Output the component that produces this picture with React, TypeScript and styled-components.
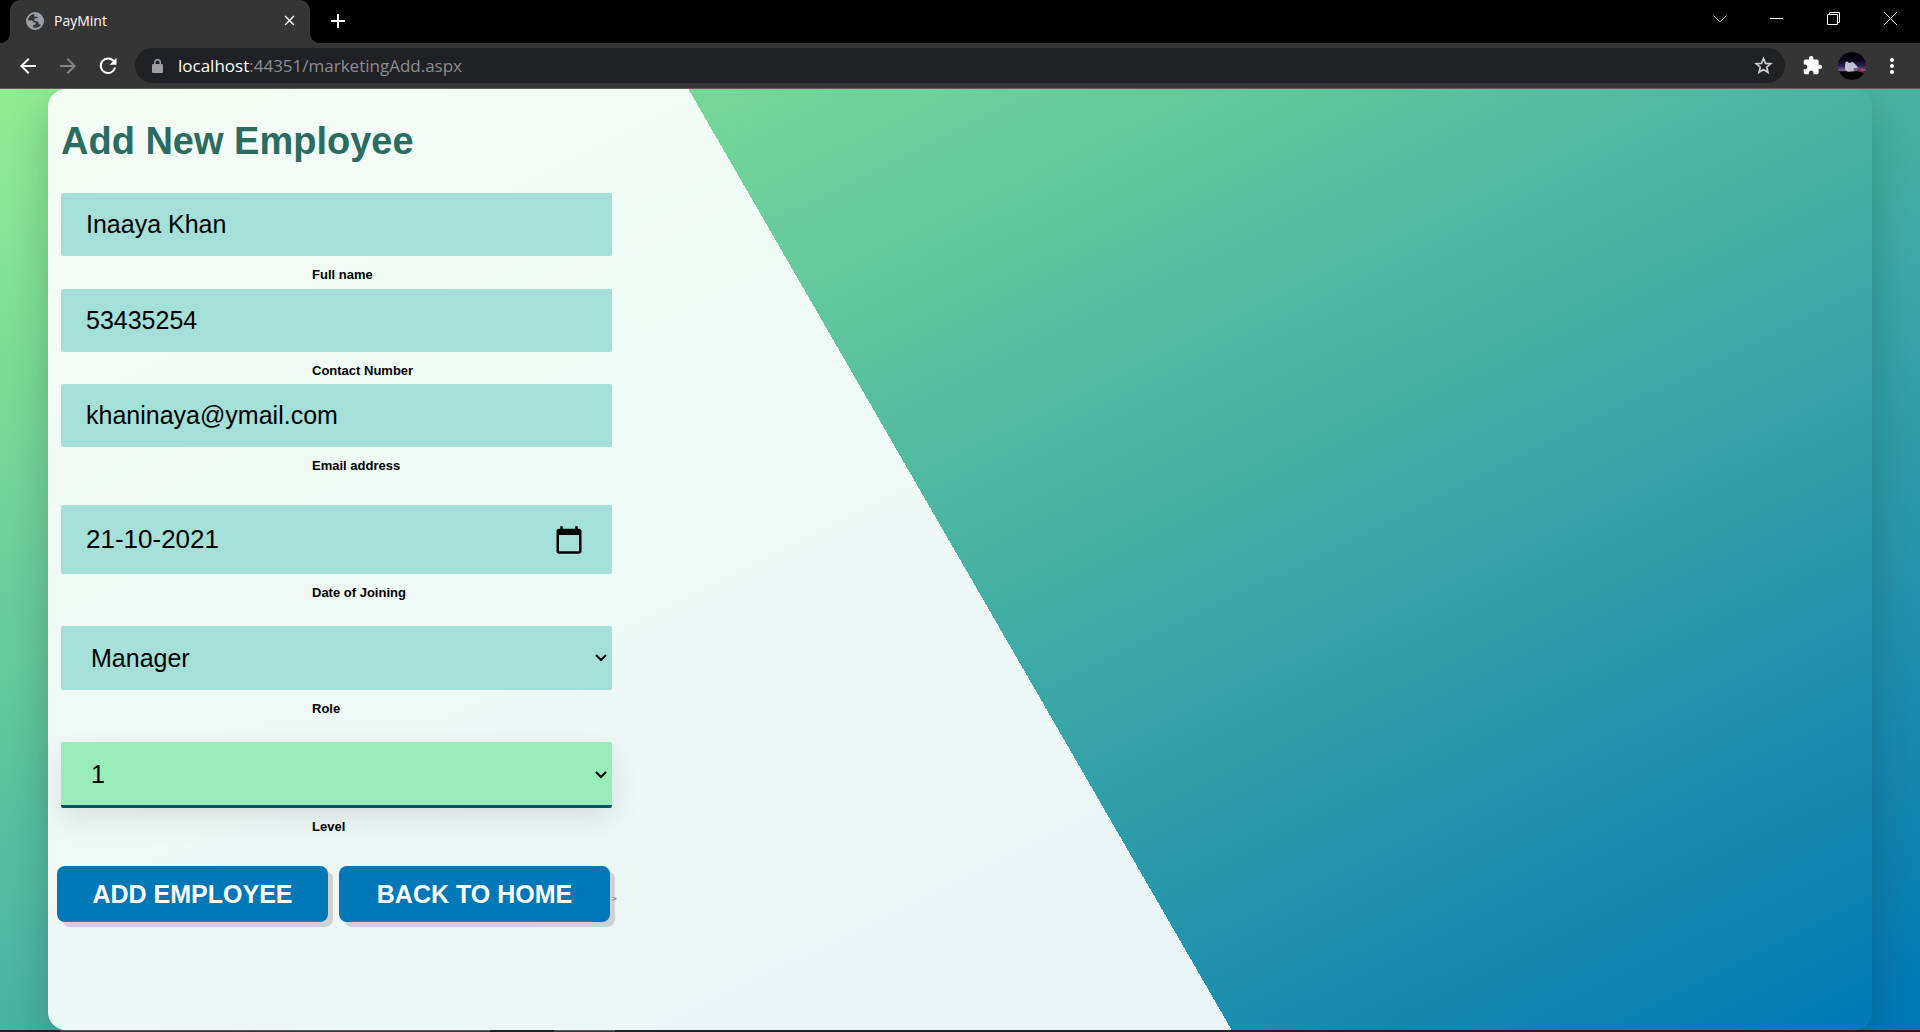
import React from "react";
import styled, { createGlobalStyle } from "styled-components";
import {
  MdArrowBack,
  MdArrowForward,
  MdExtension,
  MdMoreVert,
  MdClose,
  MdAdd,
} from "react-icons/md";

const GlobalStyle = createGlobalStyle`
  *, *::before, *::after { box-sizing: border-box; }
  body { margin: 0; }
`;

const sans = `"Liberation Sans", Arial, sans-serif`;
const chromeFont = `"Open Sans", "Noto Sans", sans-serif`;

const Window = styled.div`
  min-height: 100vh;
  display: flex;
  flex-direction: column;
  font-family: ${sans};
`;

const TabStrip = styled.div`
  display: flex;
  align-items: stretch;
  height: 43px;
  padding: 0 1px 0 10px;
  background: #000;
  color: #fff;
  font-family: ${chromeFont};
`;

const Tab = styled.div`
  position: relative;
  display: flex;
  align-items: center;
  width: 300px;
  padding: 0 12px 2px 16px;
  border-radius: 10px 10px 0 0;
  background: #353535;
  font-size: 14px;

  &::before,
  &::after {
    content: "";
    position: absolute;
    bottom: 0;
    width: 10px;
    height: 10px;
  }
  &::before {
    right: 100%;
    background: radial-gradient(circle at 0 0, transparent 10px, #353535 10px);
  }
  &::after {
    left: 100%;
    background: radial-gradient(circle at 100% 0, transparent 10px, #353535 10px);
  }
`;

const TabTitle = styled.span`
  flex: 1;
  margin-left: 10px;
`;

const IconButton = styled.button<{ $size?: number; $dim?: boolean }>`
  display: grid;
  place-items: center;
  width: ${(p) => p.$size ?? 40}px;
  height: ${(p) => p.$size ?? 40}px;
  padding: 0;
  border: 0;
  background: none;
  color: ${(p) => (p.$dim ? "#868686" : "#fff")};
`;

const NewTab = styled(IconButton)`
  margin: 1px 0 0 8px;
`;

const WindowControls = styled.div`
  display: flex;
  margin-left: auto;
`;

const WindowButton = styled.button`
  display: grid;
  place-items: center;
  width: 57px;
  height: 37px;
  padding: 0;
  border: 0;
  background: none;
`;

const Toolbar = styled.div`
  display: flex;
  align-items: center;
  height: 46px;
  padding: 0 8px;
  border-bottom: 1px solid #5c5c5c;
  background: #353535;
`;

const AddressBar = styled.div`
  flex: 1;
  display: flex;
  align-items: center;
  height: 35px;
  margin: 0 7px;
  padding: 0 2px 0 17px;
  border-radius: 18px;
  background: #202124;
  color: #9aa0a6;
`;

const Address = styled.div`
  flex: 1;
  margin-left: 15px;
  color: #8b8e92;
  font-family: ${chromeFont};
  font-size: 17px;

  b {
    color: #fff;
    font-weight: 400;
  }
`;

const Page = styled.main`
  flex: 1;
  display: flex;
  overflow: hidden;
  background: linear-gradient(to right bottom, #90ee90, #0077b6);
`;

const Card = styled.section`
  flex: 1;
  margin: 0 48px;
  padding: 30px 13px 0;
  border-radius: 18px;
  background: linear-gradient(60deg, rgba(255, 255, 255, 0.9) 50%, transparent 50%);
  box-shadow: 0 15px 40px rgba(0, 0, 0, 0.2);
`;

const Title = styled.h1`
  margin: 0 0 29px;
  color: #2a6b62;
  font-size: 38px;
  line-height: 45px;
`;

const Form = styled.form`
  display: flex;
  flex-direction: column;
  max-width: 551px;
`;

const Field = styled.div<{ $gap?: number }>`
  display: flex;
  flex-direction: column;
  margin-bottom: ${(p) => p.$gap ?? 4}px;
`;

const Label = styled.label`
  margin: 10px 0 0 251px;
  font-size: 13px;
  font-weight: 700;
  line-height: 18px;
  color: #000;
`;

const TextInput = styled.input`
  height: 63px;
  padding: 0 25px;
  border: 0;
  border-radius: 2px;
  outline: 0;
  background: #a4e0d8;
  color: #000;
  font: 25px ${sans};
`;

const DateBox = styled.div`
  display: flex;
  align-items: center;
  height: 69px;
  padding-right: 28px;
  border-radius: 2px;
  background: #a4e0d8;
`;

const DateInput = styled(TextInput)`
  flex: 1;
  min-width: 0;
  background: none;
  font-size: 26px;
`;

const CalendarButton = styled.button`
  padding: 0;
  border: 0;
  background: none;
  line-height: 0;
`;

const SelectBox = styled.div`
  display: grid;
  align-items: center;

  > * {
    grid-area: 1 / 1;
  }
  > svg {
    justify-self: end;
    margin-right: 5px;
    pointer-events: none;
  }
`;

const Select = styled.select<{ $active?: boolean }>`
  appearance: none;
  height: ${(p) => (p.$active ? 66 : 64)}px;
  padding: 0 30px;
  border: 0;
  border-bottom: ${(p) => (p.$active ? "3px solid #05545f" : "0")};
  border-radius: 2px;
  outline: 0;
  background-color: ${(p) => (p.$active ? "#98ecb7" : "#a4e0d8")};
  box-shadow: ${(p) => (p.$active ? "0 10px 30px rgba(0, 0, 0, 0.1)" : "none")};
  color: #000;
  font: 25px ${sans};
`;

const Actions = styled.div`
  display: flex;
  align-items: center;
  gap: 11px;
  margin: 0 -4px;
`;

const ActionButton = styled.button`
  flex: 0 0 271px;
  height: 56px;
  padding: 0;
  border: 0;
  border-radius: 8px;
  background: #0077b6;
  box-shadow: 5px 5px 0 #ced2d3;
  color: #fff;
  font: 700 25px ${sans};
  text-transform: uppercase;
`;

const Stray = styled.span`
  margin: 8px 0 0 -9px;
  color: #555;
  font-size: 8px;
`;

const TaskbarEdge = styled.div`
  display: flex;
  height: 2px;
  padding-left: 60px;
  gap: 64px;
  background: #202024;
`;

const TaskbarItem = styled.div<{ $width: number }>`
  width: ${(p) => p.$width}px;
  border-top: 1px solid #5a5a5a;
  background: #3a3436;
`;

const Globe = () => (
  <svg width="18" height="18" viewBox="0 0 18 18">
    <circle cx="9" cy="9" r="9" fill="#9aa0a6" />
    <path
      d="M8.500 2C5 2.200 2.200 5 2 8.300l3.600.2c1.200.1 1.700.8 1.700 1.800l2 .3c.6.4.6 1.500 0 2.100H7.200v2.900c3 .9 6.400-.5 7.900-3.200-.9.4-1.700.2-2.200-.5-.6-.9-.2-2-1.200-2.500-1-.4-2.400.1-3.200-.7-.8-.9-.2-2.200.9-2.400.8-.1 1.600.3 2.200-.2.5-.5-.1-1.200-.9-1.300-1-.1-2.200 0-2.500-.9-.2-.6.100-1.200.3-1.900z"
      fill="#353535"
    />
  </svg>
);

const Reload = () => (
  <svg width="18" height="18" viewBox="0 0 18 18">
    <path d="M14.800 4.200A7.300 7.300 0 1 0 16.100 10.600" fill="none" stroke="#fff" strokeWidth="2" />
    <path d="M17.500.8v7h-7z" fill="#fff" />
  </svg>
);

const Lock = () => (
  <svg width="11" height="14" viewBox="0 0 11 14">
    <rect y="5" width="11" height="9" rx="1" fill="#9aa0a6" />
    <path d="M2.700 6V3.500a2.800 2.800 0 0 1 5.600 0V6" fill="none" stroke="#9aa0a6" strokeWidth="1.500" />
  </svg>
);

const Star = () => (
  <svg width="19" height="19" viewBox="0 0 19 19" fill="none" stroke="#cfcfcf" strokeWidth="1.700">
    <path d="M9.500 2.500l2 4.900 5.200.4-4 3.400 1.300 5.200-4.500-2.800L5 16.400l1.300-5.200-4-3.400 5.200-.4z" />
  </svg>
);

const Chevron = () => (
  <svg width="12" height="8" viewBox="0 0 12 8" fill="none" stroke="#000" strokeWidth="2">
    <path d="M1 1l5 5 5-5" />
  </svg>
);

const Avatar = () => (
  <svg width="28" height="28" viewBox="0 0 28 28">
    <defs>
      <linearGradient id="sky" x1="0" y1="0" x2="0" y2="1">
        <stop offset="0" stopColor="#020104" />
        <stop offset="0.3" stopColor="#0c061c" />
        <stop offset="0.5" stopColor="#30204e" />
        <stop offset="0.68" stopColor="#8a6398" />
        <stop offset="0.7" stopColor="#080406" />
      </linearGradient>
      <clipPath id="disc">
        <circle cx="14" cy="14" r="14" />
      </clipPath>
    </defs>
    <g clipPath="url(#disc)">
      <rect width="28" height="28" fill="url(#sky)" />
      <path d="M19 17l7 2.500v1.500l-7-2z" fill="#a0182c" />
      <path d="M7 14l.5-4 2-.5 1.500 1.500 4-1 3 3 2 3-3 3-7 .8-3-2z" fill="#c3c0d4" />
      <path d="M16 16l5 0-1.500 2.500-4 1z" fill="#6d6872" />
    </g>
  </svg>
);

export default function App() {
  return (
    <>
      <GlobalStyle />
      <Window>
        <TabStrip>
          <Tab>
            <Globe />
            <TabTitle>PayMint</TabTitle>
            <IconButton $size={18} aria-label="Close tab">
              <MdClose size={17} />
            </IconButton>
          </Tab>
          <NewTab aria-label="New tab">
            <MdAdd size={24} />
          </NewTab>
          <WindowControls>
            <WindowButton aria-label="Search tabs">
              <svg width="14" height="8" viewBox="0 0 14 8" fill="none" stroke="#ccc">
                <path d="M.5.500l6.500 6.500 6.500-6.500" />
              </svg>
            </WindowButton>
            <WindowButton aria-label="Minimize">
              <svg width="13" height="13" viewBox="0 0 13 13" stroke="#fff">
                <path d="M0 6.500h13" />
              </svg>
            </WindowButton>
            <WindowButton aria-label="Restore">
              <svg width="13" height="13" viewBox="0 0 13 13" fill="none" stroke="#fff">
                <path d="M.5 2.500h10v10h-10zM2.500 2.500v-2h10v10h-2" />
              </svg>
            </WindowButton>
            <WindowButton aria-label="Close">
              <svg width="13" height="13" viewBox="0 0 13 13" stroke="#fff">
                <path d="M0 0l13 13M13 0l-13 13" />
              </svg>
            </WindowButton>
          </WindowControls>
        </TabStrip>
        <Toolbar>
          <IconButton aria-label="Back">
            <MdArrowBack size={24} />
          </IconButton>
          <IconButton $dim aria-label="Forward">
            <MdArrowForward size={24} />
          </IconButton>
          <IconButton aria-label="Reload">
            <Reload />
          </IconButton>
          <AddressBar>
            <Lock />
            <Address>
              <b>localhost</b>:44351/marketingAdd.aspx
            </Address>
            <IconButton aria-label="Bookmark this page">
              <Star />
            </IconButton>
          </AddressBar>
          <IconButton aria-label="Extensions">
            <MdExtension size={21} />
          </IconButton>
          <IconButton aria-label="Profile">
            <Avatar />
          </IconButton>
          <IconButton aria-label="Menu">
            <MdMoreVert size={24} />
          </IconButton>
        </Toolbar>
        <Page>
          <Card>
            <Title>Add New Employee</Title>
            <Form onSubmit={(e) => e.preventDefault()}>
              <Field $gap={5}>
                <TextInput id="name" defaultValue="Inaaya Khan" />
                <Label htmlFor="name">Full name</Label>
              </Field>
              <Field>
                <TextInput id="contact" inputMode="numeric" defaultValue="53435254" />
                <Label htmlFor="contact">Contact Number</Label>
              </Field>
              <Field $gap={30}>
                <TextInput id="email" type="email" defaultValue="khaninaya@ymail.com" />
                <Label htmlFor="email">Email address</Label>
              </Field>
              <Field $gap={24}>
                <DateBox>
                  <DateInput id="joined" defaultValue="21-10-2021" />
                  <CalendarButton type="button" aria-label="Pick a date">
                    <svg width="30" height="30" viewBox="0 0 24 24">
                      <path d="M20 3h-1V1h-2v2H7V1H5v2H4c-1.100 0-2 .9-2 2v16c0 1.100.9 2 2 2h16c1.100 0 2-.9 2-2V5c0-1.100-.9-2-2-2zm0 18H4V8h16v13z" />
                    </svg>
                  </CalendarButton>
                </DateBox>
                <Label htmlFor="joined">Date of Joining</Label>
              </Field>
              <Field $gap={24}>
                <SelectBox>
                  <Select id="role" defaultValue="Manager">
                    <option>Manager</option>
                  </Select>
                  <Chevron />
                </SelectBox>
                <Label htmlFor="role">Role</Label>
              </Field>
              <Field $gap={30}>
                <SelectBox>
                  <Select id="level" $active defaultValue="1">
                    <option>1</option>
                  </Select>
                  <Chevron />
                </SelectBox>
                <Label htmlFor="level">Level</Label>
              </Field>
              <Actions>
                <ActionButton type="submit">Add Employee</ActionButton>
                <ActionButton type="button">Back to Home</ActionButton>
                <Stray>&gt;</Stray>
              </Actions>
            </Form>
          </Card>
        </Page>
        <TaskbarEdge>
          <TaskbarItem $width={430} />
          <TaskbarItem $width={61} />
        </TaskbarEdge>
      </Window>
    </>
  );
}
